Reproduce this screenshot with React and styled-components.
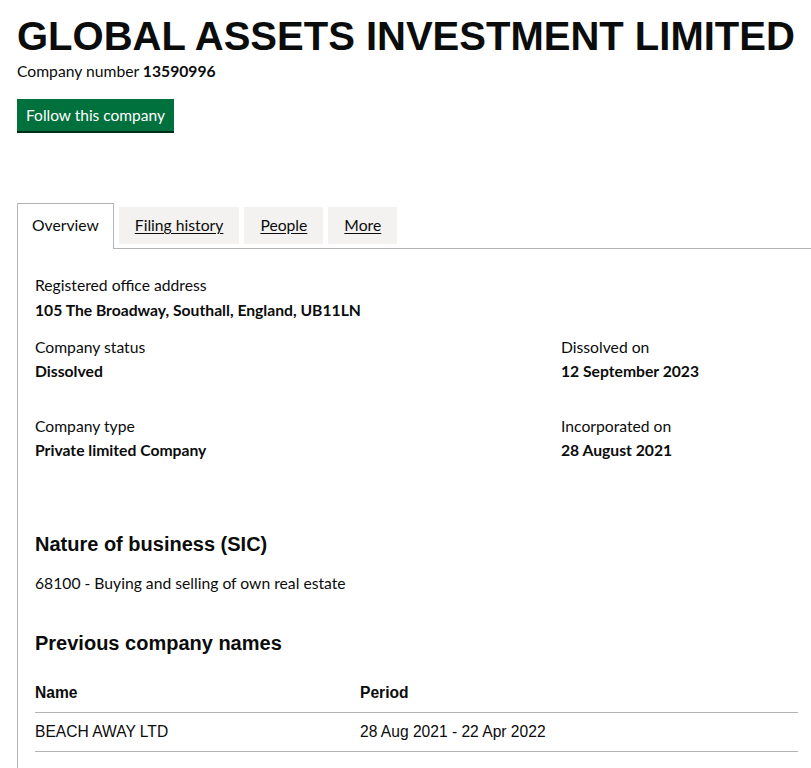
import React from 'react';
import styled, { createGlobalStyle } from 'styled-components';

const GlobalStyle = createGlobalStyle`
  body {
    margin: 0;
    overflow: hidden;
    background: #fff;
    color: #0b0c0c;
    font-family: Lato, "Noto Sans", Arial, sans-serif;
  }
`;

const Page = styled.div`
  padding-left: 17px;
  width: 820px;
`;

const Title = styled.h1`
  margin: 14px 0 0;
  font-family: "Liberation Sans", Arial, sans-serif;
  font-size: 40px;
  line-height: 44px;
  font-weight: 700;
  white-space: nowrap;
`;

const CompanyNumber = styled.p`
  margin: 3px 0 0;
  font-size: 15.7px;
  line-height: 20px;

  strong {
    font-weight: 700;
  }
`;

const FollowButton = styled.button`
  margin-top: 18px;
  display: block;
  height: 32px;
  padding: 0 9px;
  border: 0;
  background: #00703c;
  box-shadow: 0 2px 0 #002d18;
  color: #fff;
  font-family: inherit;
  font-size: 15.5px;
  line-height: 20px;
  cursor: pointer;
`;

const Tabs = styled.div`
  margin-top: 72px;
`;

const TabList = styled.ul`
  display: flex;
  align-items: flex-end;
  margin: 0;
  padding: 0;
  list-style: none;
  border-bottom: 1px solid #b1b4b6;
`;

const Tab = styled.li`
  margin-right: 5px;
  font-size: 15.7px;
  line-height: 20px;
  ${({ active }) =>
    active
      ? `
    margin-bottom: -1px;
    padding: 11px 14px 14px;
    border: 1px solid #b1b4b6;
    border-bottom: 0;
    background: #fff;
  `
      : `
    margin-bottom: 4px;
    padding: 8px 16px 9px;
    background: #f3f2f1;
  `}

  a {
    color: #0b0c0c;
    text-decoration: ${({ active }) => (active ? 'none' : 'underline')};
    text-underline-offset: 2px;
  }
`;

const Panel = styled.div`
  border-left: 1px solid #b1b4b6;
  padding: 26px 18px 40px 17px;
`;

const Content = styled.div`
  width: 763px;
`;

const FieldGrid = styled.div`
  display: grid;
  grid-template-columns: 526px 1fr;
  margin-top: ${({ gap }) => gap || 0}px;
`;

const Field = styled.dl`
  margin: 0;
`;

const Label = styled.dt`
  font-size: 15.7px;
  line-height: 20px;
`;

const Value = styled.dd`
  margin: ${({ tight }) => (tight ? 4 : 5)}px 0 0;
  font-size: 15.7px;
  line-height: 20px;
  font-weight: 700;
`;

const SectionHeading = styled.h2`
  margin: ${({ top }) => top}px 0 0;
  font-family: "Liberation Sans", Arial, sans-serif;
  font-size: 20px;
  line-height: 25px;
  font-weight: 700;
`;

const BodyText = styled.p`
  margin: 16px 0 0;
  font-size: 15.7px;
  line-height: 20px;
`;

const Table = styled.table`
  width: 100%;
  margin-top: 18px;
  border-collapse: collapse;
  font-family: "Liberation Sans", Arial, sans-serif;
  font-size: 15.6px;
  line-height: 18px;
`;

const Cell = styled.td`
  padding: 10px 20px 10px 0;
  border-bottom: 1px solid #b1b4b6;
  text-align: left;
  vertical-align: top;
  width: ${({ w }) => w || 'auto'};
  font-weight: ${({ head }) => (head ? 700 : 400)};
`;

const tabs = [
  { label: 'Overview', active: true },
  { label: 'Filing history' },
  { label: 'People' },
  { label: 'More' },
];

export default function App() {
  return (
    <>
      <GlobalStyle />
      <Page>
        <Title>GLOBAL ASSETS INVESTMENT LIMITED</Title>
        <CompanyNumber>
          Company number <strong>13590996</strong>
        </CompanyNumber>
        <FollowButton>Follow this company</FollowButton>

        <Tabs>
          <TabList>
            {tabs.map((t) => (
              <Tab key={t.label} active={t.active}>
                <a href="#">{t.label}</a>
              </Tab>
            ))}
          </TabList>
          <Panel>
            <Content>
              <Field>
                <Label>Registered office address</Label>
                <Value>105 The Broadway, Southall, England, UB11LN</Value>
              </Field>

              <FieldGrid gap={17}>
                <Field>
                  <Label>Company status</Label>
                  <Value tight>Dissolved</Value>
                </Field>
                <Field>
                  <Label>Dissolved on</Label>
                  <Value tight>12 September 2023</Value>
                </Field>
              </FieldGrid>

              <FieldGrid gap={35}>
                <Field>
                  <Label>Company type</Label>
                  <Value tight>Private limited Company</Value>
                </Field>
                <Field>
                  <Label>Incorporated on</Label>
                  <Value tight>28 August 2021</Value>
                </Field>
              </FieldGrid>

              <SectionHeading top={72}>Nature of business (SIC)</SectionHeading>
              <BodyText>68100 - Buying and selling of own real estate</BodyText>

              <SectionHeading top={38}>Previous company names</SectionHeading>
              <Table>
                <thead>
                  <tr>
                    <Cell as="th" head w="305px">Name</Cell>
                    <Cell as="th" head>Period</Cell>
                  </tr>
                </thead>
                <tbody>
                  <tr>
                    <Cell>BEACH AWAY LTD</Cell>
                    <Cell>28 Aug 2021 - 22 Apr 2022</Cell>
                  </tr>
                </tbody>
              </Table>
            </Content>
          </Panel>
        </Tabs>
      </Page>
    </>
  );
}
